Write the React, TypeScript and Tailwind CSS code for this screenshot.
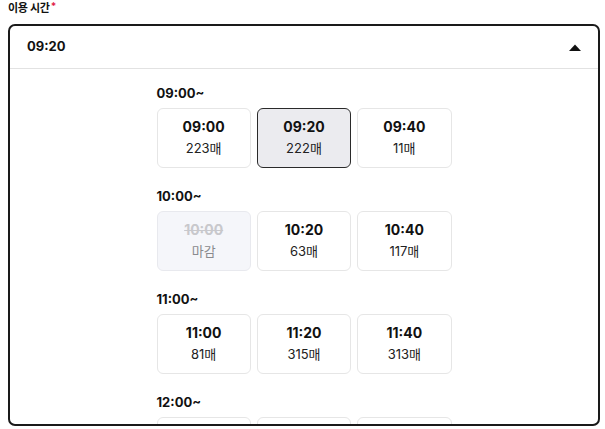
import React from "react";

type Slot = { time: string; count?: string; closed?: boolean; selected?: boolean };
const groups: { title: string; slots: Slot[] }[] = [
  { title: "09:00~", slots: [{ time: "09:00", count: "223매" }, { time: "09:20", count: "222매", selected: true }, { time: "09:40", count: "11매" }] },
  { title: "10:00~", slots: [{ time: "10:00", closed: true }, { time: "10:20", count: "63매" }, { time: "10:40", count: "117매" }] },
  { title: "11:00~", slots: [{ time: "11:00", count: "81매" }, { time: "11:20", count: "315매" }, { time: "11:40", count: "313매" }] },
  { title: "12:00~", slots: [{ time: "12:00", count: "95매" }, { time: "12:20", count: "120매" }, { time: "12:40", count: "88매" }] },
];

export default function App() {
  return (
    <div
      className="w-[605px] h-[429px] bg-white overflow-hidden text-[#111]"
      style={{ fontFamily: 'Inter, "Noto Sans CJK KR", sans-serif' }}
    >
      <div className="pl-2 pt-[1px] h-[24px] flex items-start">
        <span className="text-[11px] font-bold leading-[14px] tracking-tight">이용 시간</span>
        <span className="text-[#e11d48] text-[10px] font-bold leading-[10px] ml-[1px]">*</span>
      </div>
      <div className="ml-2 w-[592px] h-[402px] border-2 border-[#1a1a1a] rounded-[7px] overflow-hidden">
        <div className="h-[43px] flex items-center justify-between pl-[17px] pr-[17px] border-b border-[#e2e2e2]">
          <span className="text-[13px] font-bold">09:20</span>
          <svg width="12" height="7" viewBox="0 0 12 7">
            <path d="M0 7 L6 0.5 L12 7 Z" fill="#111" />
          </svg>
        </div>
        <div className="w-[295px] mx-auto pt-[15px]">
          {groups.map((g) => (
            <div key={g.title} className="mb-[19px]">
              <div className="text-[13px] font-bold leading-[18px] mb-[6px]">{g.title}</div>
              <div className="grid grid-cols-3 gap-[6px]">
                {g.slots.map((s) => (
                  <div
                    key={s.time}
                    className={
                      "h-[60px] rounded-[6px] border flex flex-col items-center justify-center " +
                      (s.selected
                        ? "bg-[#ebebef] border-[#2a2a2a]"
                        : s.closed
                        ? "bg-[#f5f6fa] border-[#e8e9ee]"
                        : "bg-white border-[#e6e6e6]")
                    }
                  >
                    <span
                      className={
                        "text-[14px] font-bold leading-[18px] " +
                        (s.closed ? "text-[#c8c8cc] line-through" : "text-[#111]")
                      }
                    >
                      {s.time}
                    </span>
                    <span
                      className={
                        "text-[13px] leading-[20px] mt-[2px] " + (s.closed ? "text-[#8a8a8e]" : "text-[#222]")
                      }
                    >
                      {s.closed ? "마감" : s.count}
                    </span>
                  </div>
                ))}
              </div>
            </div>
          ))}
        </div>
      </div>
    </div>
  );
}
